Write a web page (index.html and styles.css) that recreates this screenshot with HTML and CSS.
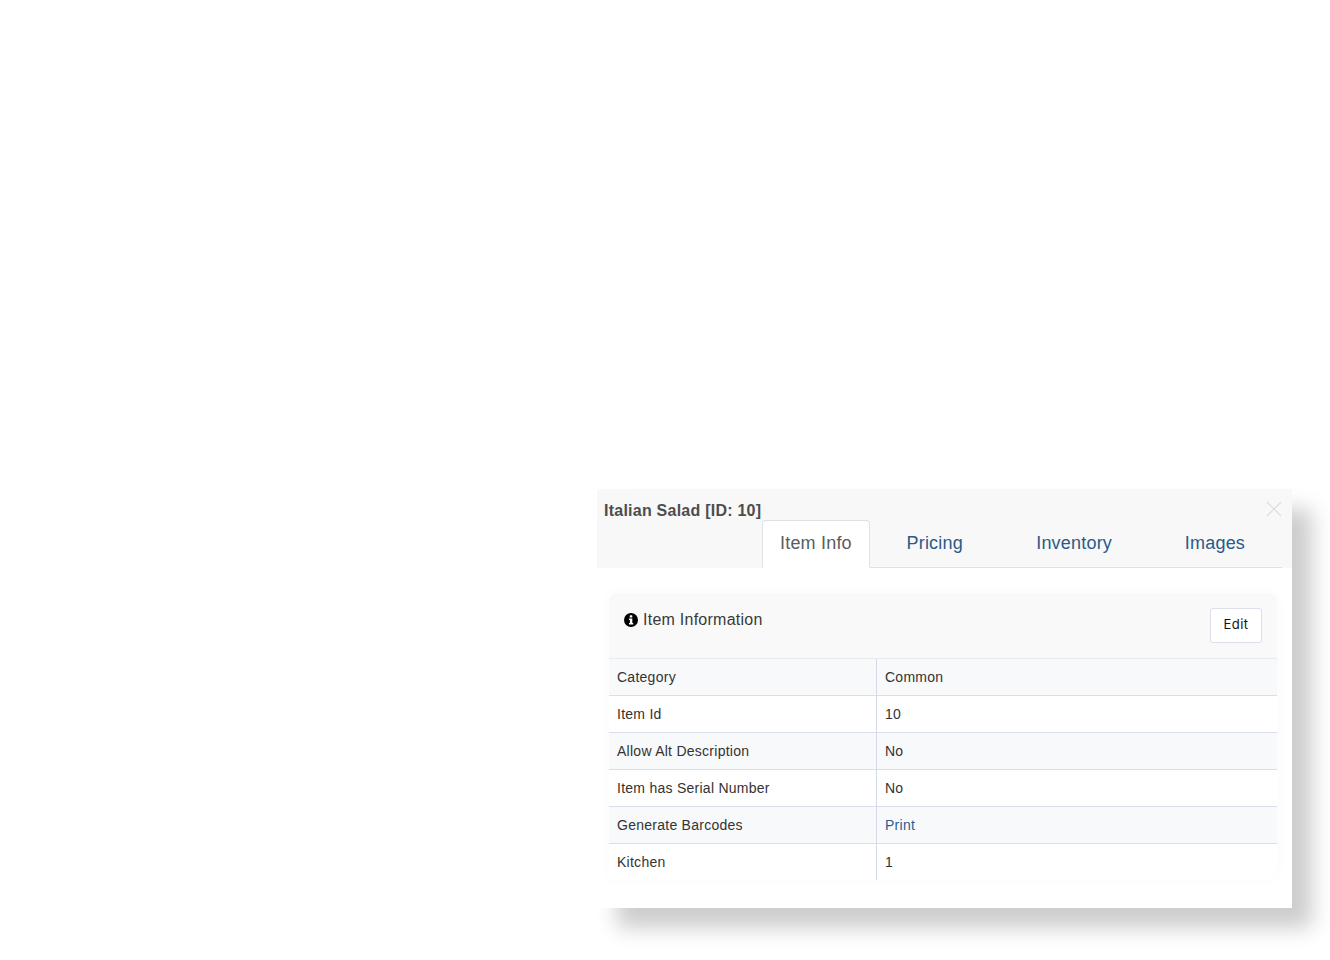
FILE: index.html
```html
<!DOCTYPE html>
<html lang="en">
<head>
<meta charset="utf-8">
<title>Italian Salad</title>
<link rel="stylesheet" href="styles.css">
</head>
<body>
<div class="modal">
  <header class="modal-head">
    <h4 class="title">Italian Salad [ID: 10]</h4>
    <button class="close" aria-label="Close">
      <svg width="16" height="16" viewBox="0 0 16 16"><path d="M1 1L15 15M15 1L1 15" stroke="#dcdcdc" stroke-width="1.2" fill="none"/></svg>
    </button>
    <nav class="tabs">
      <a class="tab active">Item Info</a>
      <a class="tab t2">Pricing</a>
      <a class="tab t3">Inventory</a>
      <a class="tab t4">Images</a>
    </nav>
  </header>
  <section class="modal-body">
    <div class="card">
      <div class="card-head">
        <h5 class="card-title">
          <svg class="info" width="14" height="14" viewBox="0 0 14 14"><circle cx="7" cy="7" r="7" fill="#000"/><rect x="5.7" y="2.2" width="2.6" height="2.4" rx=".6" fill="#fff"/><path d="M5 5.5H8.3V9.9H9.2V11.4H5V9.9H5.9V7H5Z" fill="#fff"/></svg>
          Item Information
        </h5>
        <button class="btn">Edit</button>
      </div>
      <table class="info-table">
        <tbody>
          <tr><td>Category</td><td>Common</td></tr>
          <tr><td>Item Id</td><td>10</td></tr>
          <tr><td>Allow Alt Description</td><td>No</td></tr>
          <tr><td>Item has Serial Number</td><td>No</td></tr>
          <tr><td>Generate Barcodes</td><td><a class="link">Print</a></td></tr>
          <tr><td>Kitchen</td><td>1</td></tr>
        </tbody>
      </table>
    </div>
  </section>
</div>
</body>
</html>
```
FILE: styles.css
```css
* { box-sizing: border-box; }
html, body { margin: 0; padding: 0; background: #fff; }
body { width: 1330px; height: 960px; overflow: hidden; font-family: "Liberation Sans", Arial, sans-serif; color: #212529; }

.modal {
  position: absolute;
  left: 597px;
  top: 489px;
  width: 695px;
  height: 419px;
  background: #fff;
  box-shadow: 20px 20px 20px rgba(0, 0, 0, .2);
}

.modal-head {
  position: relative;
  height: 79px;
  background: #f8f8f8;
  padding: 12px 10px 0 7px;
}
.title {
  margin: 0;
  height: 19px;
  font-size: 16px;
  line-height: 19px;
  font-weight: 700;
  letter-spacing: .24px;
  color: #4d4d4d;
}
.close {
  position: absolute;
  right: 10px;
  top: 12px;
  width: 16px;
  height: 16px;
  padding: 0;
  border: 0;
  background: none;
  line-height: 0;
}
.tabs {
  display: flex;
  height: 48px;
  margin-left: 158px;
  border-bottom: 1px solid #dee2e6;
}
.tab {
  display: block;
  height: 48px;
  padding: 12px 18px 0;
  font-size: 18px;
  line-height: 20px;
  letter-spacing: .2px;
  white-space: nowrap;
  color: #2a5a8a;
  border: 1px solid transparent;
}
.tab.active {
  width: 108px;
  padding-left: 17px;
  color: #5c5c5c;
  background: #fff;
  border-color: #dee2e6 #dee2e6 #fff;
  border-radius: 4px 4px 0 0;
}
.t2 { width: 129px; padding-left: 35.5px; }
.t3 { width: 149px; padding-left: 36.5px; }
.t4 { width: 135px; padding-left: 36.5px; }

.modal-body { padding: 25px 15px 28px 12px; }
.card {
  height: 287px;
  background: #fff;
  border-radius: 8px;
  box-shadow: 0 0 16px rgba(0, 0, 0, .025);
  overflow: hidden;
}
.card-head {
  display: flex;
  justify-content: space-between;
  height: 66px;
  padding: 15px 15px 0;
  background: #f9f9f9;
  border-bottom: 1px solid #e9ecef;
}
.card-title {
  display: flex;
  align-items: center;
  gap: 5px;
  height: 23px;
  margin: 0;
  font-size: 16px;
  line-height: 24px;
  font-weight: 400;
  letter-spacing: .25px;
  color: #3a3a3a;
}
.btn {
  height: 35px;
  width: 52px;
  padding: 0 0 3px;
  background: #fff;
  border: 1px solid #dbe0ea;
  border-radius: 3px;
  font-family: Inter, "Liberation Sans", sans-serif;
  font-size: 13px;
  letter-spacing: .5px;
  font-weight: 400;
  color: #111;
}

.info-table {
  width: 100%;
  table-layout: fixed;
  border-collapse: collapse;
  font-size: 14px;
  letter-spacing: .26px;
  color: #333;
}
.info-table td {
  height: 37px;
  padding: 0 8px;
  border-top: 1px solid #d9deea;
}
.info-table tr:first-child td { border-top: 0; height: 36px; }
.info-table td:first-child { width: 267.5px; border-right: 1px solid #d4d9e6; }
.info-table tr:nth-child(odd) td { background: #f8f9fb; }
.link { color: #2a6091; }
```
